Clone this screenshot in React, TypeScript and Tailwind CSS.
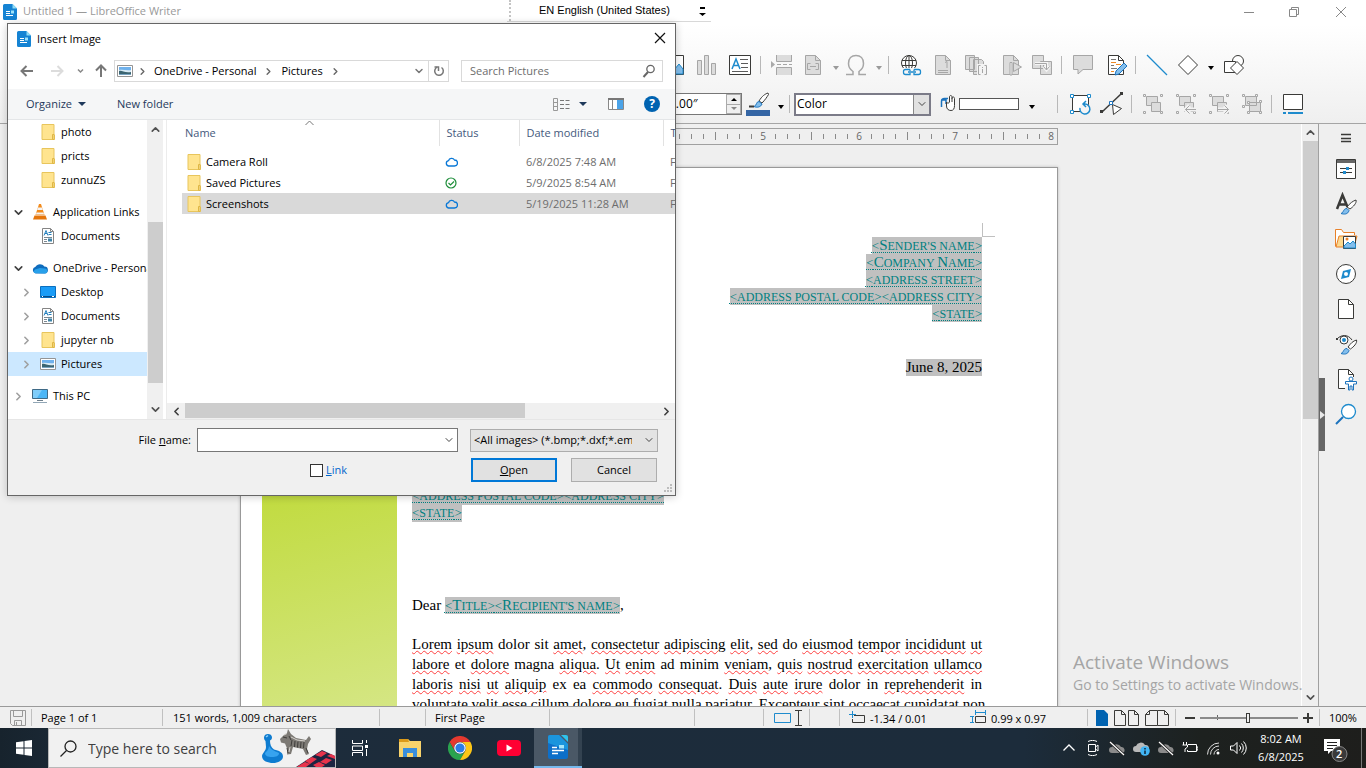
import type { ReactNode } from "react";
import { ChevronDown, ChevronLeft, ChevronRight, ChevronUp } from "lucide-react";

type Kids = { children?: ReactNode };

function Art({ w = 24, h = 24, children }: Kids & { w?: number; h?: number }) {
  return (
    <svg width={w} height={h} viewBox={`0 0 ${w} ${h}`} fill="none" className="block shrink-0" aria-hidden="true">
      {children}
    </svg>
  );
}

function Tool({ label, gap, children }: Kids & { label: string; gap: string }) {
  return (
    <button type="button" aria-label={label} className={`${gap} shrink-0`}>
      {children}
    </button>
  );
}

function Sep({ gap }: { gap: string }) {
  return <span className={`${gap} h-[18px] w-px shrink-0 bg-[#b8b8b8]`} />;
}

function Drop({ label, gap, muted }: { label: string; gap: string; muted?: boolean }) {
  return (
    <Tool label={label} gap={gap}>
      <Art w={8} h={20}>
        <path d="M1 11h6l-3 4z" fill={muted ? "#9a9a9a" : "#000"} />
      </Art>
    </Tool>
  );
}

const G = "#a6a6a6";
const L = "#dcdcdc";
const D = "#3a3a38";
const B = "#1e8bcd";

/* ---------- shared file icons ---------- */

function WriterIcon() {
  return (
    <Art w={14} h={16}>
      <path d="M1.500 0h8L14 4.500V14.500a1.500 1.500 0 0 1-1.500 1.500h-11A1.500 1.500 0 0 1 0 14.500v-13A1.500 1.500 0 0 1 1.500 0z" fill="#1583d3" />
      <path d="M9.500 0 14 4.500H9.500z" fill="#8fdcf5" />
      <path d="M3 7.500h4M3 9.500h4M3 11.500h7" stroke="#fff" />
      <path d="M8 6.500h3v3H8z" fill="#9de2fa" />
    </Art>
  );
}

function FolderIcon() {
  return (
    <Art w={16} h={16}>
      <path d="M2 .5h12v10.500h.5v4.500H2z" fill="#ffe48f" stroke="#e8c55c" />
      <path d="M12.500 15.500v-5h1.500v5z" fill="#ffe9a8" stroke="#dfb744" />
    </Art>
  );
}

function DocIcon() {
  return (
    <Art w={16} h={16}>
      <path d="M2.500.5h8l3 3v12h-11z" fill="#fff" stroke="#858585" />
      <path d="M10.500.5v3h3" stroke="#858585" />
      <path d="m4 7.500 2-5 2 5M5 5.500h2M8.500 4.500h3M8.500 6.500h3" stroke="#2480bd" />
      <path d="M4 9.500h8M4 11.500h3M4 13.500h3" stroke="#7b8993" />
      <path d="M8 10.500h4v3H8z" fill="#3d83a8" />
    </Art>
  );
}

function PictureIcon() {
  return (
    <Art w={16} h={16}>
      <path d="M.5 2.500h15v11H.5z" fill="#fff" stroke="#949494" />
      <path d="M2 4h12v4H2z" fill="#6fb1ec" />
      <path d="M2 7c4-1 8 1 12 0v2H2z" fill="#d8ebf5" />
      <path d="M2 8c3-1 5 2 12 1v3H2z" fill="#3b6572" />
      <path d="M2 11h12v1H2z" fill="#79a4c0" />
    </Art>
  );
}

function VlcIcon() {
  return (
    <Art w={16} h={16}>
      <path d="M7 0h2l3.500 11h-9z" fill="#f38b1c" />
      <path d="M6 3.500h4l.8 2.500H5.200zM4.500 8.500h7l.6 2H3.900z" fill="#f4f4f4" />
      <path d="m2.500 11.500h11l1.500 4H1z" fill="#e5760c" />
    </Art>
  );
}

function OneDriveIcon() {
  return (
    <Art w={16} h={16}>
      <path d="M3.500 13.500a3.500 3.500 0 0 1 0-6.800A5.200 5.200 0 0 1 12.300 6.500a3.500 3.500 0 0 1 .2 7z" fill="#0f6cbd" />
      <path d="M2 13a3 3 0 0 1 1-3.500L8 8l4.500.5a2.500 2.500 0 0 1 .5 5z" fill="#28a0ea" />
    </Art>
  );
}

function DesktopIcon() {
  return (
    <Art w={16} h={16}>
      <path d="M.5 2.500h15v11H.5z" fill="#1a9cf7" stroke="#0b6fbe" />
      <path d="M1 12.500h14" stroke="#064b88" />
      <path d="M2 12.500h1M12 12.500h2" stroke="#fff" />
    </Art>
  );
}

function PcIcon() {
  return (
    <Art w={16} h={16}>
      <path d="M.5 1.500h15v9H.5z" fill="#4bb6f6" stroke="#3f6a86" />
      <path d="M5 12.500h6" stroke="#6d7f8c" />
      <path d="M1 14.500h14" stroke="#92a7b6" />
      <path d="M1 2h9L5 10H1z" fill="#7fcdfa" />
    </Art>
  );
}

/* ---------- writer toolbars ---------- */

function GroupArt({ arrow }: { arrow?: "left" | "right" }) {
  const line = arrow === "left" ? "M22 17.500H11.500m4-4-4 4 4 4" : "M11 17.500h10.500m-4-4 4 4-4 4";
  return (
    <Art>
      <path d="M5.500 4.500h11v9h-11z" fill={L} stroke={G} />
      <path d="M10.500 10.500h9v9h-9z" fill={L} stroke={G} />
      <path d="M2.500 2.500h2v2h-2zM19.500 2.500h2v2h-2zM2.500 19.500h2v2h-2zM19.500 19.500h2v2h-2z" fill="#f4f4f4" stroke={G} />
      {arrow && <path d={line} stroke="#f2f2f2" strokeWidth="4" />}
      {arrow && <path d={line} stroke={G} />}
    </Art>
  );
}

function InsertToolbar() {
  return (
    <div className="flex h-10 items-center overflow-hidden pl-[662px]">
      <Tool label="Insert image" gap="">
        <Art>
          <path d="M2.500 2.500h19v19h-19z" fill="#fff" stroke={D} />
          <path d="M3 19l5-6 4 4 5-6 4 5v5H3z" fill="#83beec" stroke={B} />
        </Art>
      </Tool>
      <Tool label="Insert chart" gap="ml-2">
        <Art>
          <path d="M3.500 7.500h4v14h-4zM10.500 2.500h4v19h-4zM17.500 10.500h4v11h-4z" fill={L} stroke={G} />
        </Art>
      </Tool>
      <Tool label="Insert text box" gap="ml-[10px]">
        <Art>
          <path d="M1.500 2.500h21v19h-21z" fill="#fff" stroke={D} />
          <path d="m4 16 4-10 4 10M5.500 12.500h5" stroke={B} strokeWidth="1.500" />
          <path d="M12 6.500h8M13 10.500h7M13 14.500h7M4 18.500h16" stroke="#5c5c5c" />
        </Art>
      </Tool>
      <Sep gap="ml-2" />
      <Tool label="Insert page break" gap="ml-[9px]">
        <Art>
          <path d="M6.500 2v6.500h15V2M6.500 22v-7.500h15V22" fill={L} stroke={G} />
          <path d="M7 11.500h15" stroke={G} strokeDasharray="4 2" />
          <path d="m1 8 4 3.500-4 3.500z" fill="#aaa" />
        </Art>
      </Tool>
      <Tool label="Insert field" gap="ml-[7px]">
        <Art>
          <path d="M4.500 2.500h10l5 5v14h-15z" fill={L} stroke={G} />
          <path d="M14.500 2.500v5h5M9.500 10.500h-3v6h3M14.500 10.500h3v6h-3M9 13.500h6" stroke={G} />
        </Art>
      </Tool>
      <Drop label="Field choices" gap="ml-[7px]" muted />
      <Tool label="Special character" gap="ml-1">
        <Art>
          <path d="M2 21.500h7v-3c-3-2-4.500-4-4.500-8 0-5 3-8 7.500-8s7.500 3 7.500 8c0 4-1.500 6-4.500 8v3h7" stroke={G} strokeWidth="1.500" />
        </Art>
      </Tool>
      <Drop label="Symbol choices" gap="ml-[7px]" muted />
      <Sep gap="ml-[5px]" />
      <Tool label="Insert hyperlink" gap="ml-[9px]">
        <Art>
          <g stroke={D}>
            <circle cx="11" cy="10" r="7.500" fill="#fff" />
            <ellipse cx="11" cy="10" rx="3.500" ry="7.500" />
            <path d="M11 2.500v15M4 7.500h14M4 12.500h14" />
          </g>
          <path d="M5 15h19v8H5z" fill="#f7f7f7" />
          <path d="M12 16.500H7.500a2 2 0 0 0-2 2v1a2 2 0 0 0 2 2H12v-1.500m0-2v-1.500m4 0h4.500a2 2 0 0 1 2 2v1a2 2 0 0 1-2 2H16v-1.500m0-2v-1.500M10 19h8" stroke={B} strokeWidth="1.300" />
        </Art>
      </Tool>
      <Tool label="Insert footnote" gap="ml-[9px]">
        <Art>
          <path d="M4.500 2.500h10l5 5v14h-15z" fill={L} stroke={G} />
          <path d="M14.500 2.500v5h5M7 17.500h10M7 19.500h10M14 9.500l2-1V15" stroke={G} />
        </Art>
      </Tool>
      <Tool label="Insert index" gap="ml-2">
        <Art>
          <path d="M2.500 2.500h9v14h-9zM6.500 4.500h9v14h-9zM10.500 6.500h8l2 2v13h-10z" fill={L} stroke={G} />
          <path d="M14 11h10v12H14z" fill="#f4f4f4" />
          <path d="M17.500 12.500h-2v9h2M21.500 12.500h2v9h-2M19.500 14v1M19.500 16v4" stroke={G} />
        </Art>
      </Tool>
      <Tool label="Insert bookmark" gap="ml-3">
        <Art>
          <path d="M4.500 2.500h10l5 5v14h-15z" fill={L} stroke={G} />
          <path d="M14.500 2.500v5h5" stroke={G} />
          <path d="M11 9.500h2V22h-2z" fill="#f5f5f5" stroke={G} />
          <path d="m14.500 9.500 8 4.500-8 4.500z" fill={L} stroke={G} />
        </Art>
      </Tool>
      <Tool label="Insert cross-reference" gap="ml-[7px]">
        <Art>
          <path d="M2.500 2.500h11v13h-11zM10.500 8.500h11v13h-11z" fill={L} stroke={G} />
          <path d="M5 10.500h11.500v6m-3-3 3 3.500 3-3.500" stroke="#f5f5f5" strokeWidth="3" />
          <path d="M5 10.500h11.500v6m-3-3 3 3.500 3-3.500" stroke={G} />
        </Art>
      </Tool>
      <Sep gap="ml-[7px]" />
      <Tool label="Insert comment" gap="ml-[9px]">
        <Art>
          <path d="M2.500 2.500h19v14H12l-5 4.500v-4.500H2.500z" fill={L} stroke={G} />
        </Art>
      </Tool>
      <Tool label="Track changes" gap="ml-[9px]">
        <Art>
          <path d="M4.500 2.500h10l5 5v14h-15z" fill="#fff" stroke={D} />
          <path d="M14.500 2.500v5h5" stroke={D} />
          <path d="M7 6.500h5M7 12.500h3M7 15.500h6" stroke="#777" />
          <path d="M7 9.500h5M12 11.500h5M7 18.500h3" stroke="#f08a24" />
          <path d="m11 22 1-4 8-8 3 3-8 8z" fill="#83beec" stroke="#1c73bd" />
        </Art>
      </Tool>
      <Sep gap="ml-[7px]" />
      <Tool label="Insert line" gap="ml-[9px]">
        <Art>
          <path d="m2 2 20 20" stroke={B} strokeWidth="1.300" />
        </Art>
      </Tool>
      <Tool label="Basic shapes" gap="ml-[7px]">
        <Art>
          <path d="m12 2.500 9.500 9.500-9.500 9.500L2.500 12z" fill="#fff" stroke={D} />
        </Art>
      </Tool>
      <Drop label="Shape choices" gap="ml-[7px]" />
      <Tool label="Show draw functions" gap="ml-[7px]">
        <Art>
          <circle cx="16" cy="8" r="5.500" fill="#fff" stroke={D} />
          <path d="M2.500 8.500h11v11h-11z" fill="#fff" stroke={D} />
          <path d="m15 8.500 6.500 6.500-6.500 6.500L8.500 15z" fill="#fff" stroke={D} />
        </Art>
      </Tool>
    </div>
  );
}

function ImageToolbar() {
  return (
    <div className="flex h-[38px] items-center overflow-hidden pl-[642px]">
      <div className="flex h-[22px] w-[100px] shrink-0 items-center border border-[#777] bg-white">
        <input aria-label="Line width" defaultValue="0.00″" className="w-0 min-w-0 grow pl-[26px] text-[12px] text-black outline-none" />
        <span className="flex h-full w-[15px] shrink-0 flex-col border border-[#aaa] bg-[#efefef]">
          <button type="button" aria-label="Increase" className="flex grow items-center justify-center border-b border-[#aaa]">
            <Art w={6} h={4}>
              <path d="M0 4h6L3 1z" fill="#000" />
            </Art>
          </button>
          <button type="button" aria-label="Decrease" className="flex grow items-center justify-center">
            <Art w={6} h={4}>
              <path d="M0 0h6L3 3z" fill="#888" />
            </Art>
          </button>
        </span>
      </div>
      <Tool label="Line color" gap="ml-1">
        <Art>
          <path d="M0 18h24v6H0z" fill="#3465a4" />
          <path d="M3 14.500h5" stroke={D} strokeWidth="2" />
          <path d="M13 9c3-5 6-7 9-8l.5 1.500C21 5 19 8 16 11z" fill="#fff" stroke={D} />
          <path d="M8 14.500c3-1 2-5 5-5l3 2.500c-1 3-5 4-8 2.500z" fill="#83beec" stroke="#1c73bd" />
        </Art>
      </Tool>
      <Drop label="Line color choices" gap="ml-[7px]" />
      <Sep gap="ml-1" />
      <div className="ml-1 grid h-[23px] w-[137px] shrink-0 items-stretch border-2 border-[#7b7b88] bg-white">
        <select aria-label="Area style" className="col-start-1 row-start-1 appearance-none px-px text-[12px] text-black outline-none">
          <option>Color</option>
        </select>
        <span className="pointer-events-none col-start-1 row-start-1 flex w-4 items-center justify-center justify-self-end border-l border-[#888] bg-[#e1e1e1]">
          <ChevronDown size={12} color="#444" />
        </span>
      </div>
      <Tool label="Fill color" gap="ml-[9px]">
        <Art w={16} h={22}>
          <path d="M1.500 14V8.500c0-2 1-3 3-3H8M1 7h5v4" stroke="#1c73bd" strokeWidth="1.500" />
          <path d="M6.500 9v4c0 3 2 4.500 4.500 4.500s3.500-2 3.500-5V5.500c0-2-2.500-2-2.500 0V4c0-2-2.500-2-2.500 0v5L8 10.500z" fill="#fff" stroke={D} />
          <path d="M12 5v4" stroke={D} />
        </Art>
      </Tool>
      <span className="ml-[3px] h-3 w-[60px] shrink-0 border border-[#555] bg-white" />
      <Drop label="Fill color choices" gap="ml-[9px]" />
      <Sep gap="ml-[21px]" />
      <Tool label="Rotate" gap="ml-[10px]">
        <Art>
          <path d="M4.500 3.500h16v16h-16z" fill="#fff" stroke={D} />
          <circle cx="17" cy="17" r="5.500" fill="#f4f4f4" />
          <path d="M12 16a5 5 0 1 0 5-4h-2m3-3-3 3 3 3" stroke={B} strokeWidth="1.500" />
          <path d="M2.500 2.500h3v3h-3zM19.500 2.500h3v3h-3zM2.500 18.500h3v3h-3z" fill="#fff" stroke={B} />
        </Art>
      </Tool>
      <Tool label="Edit points" gap="ml-2">
        <Art>
          <path d="M2 20 21 2" stroke={D} strokeWidth="1.500" />
          <path d="M0 18h3v3H0zM20 0h3v3h-3z" fill={D} />
          <path d="m12.500 12.500 9 4-8 6z" fill="#fff" stroke={D} />
          <path d="M9.500 9.500h3v3h-3z" fill="#fff" stroke="#1c73bd" />
        </Art>
      </Tool>
      <Sep gap="ml-[7px]" />
      <Tool label="Group" gap="ml-[9px]">
        <GroupArt />
      </Tool>
      <Tool label="Enter group" gap="ml-[9px]">
        <GroupArt arrow="left" />
      </Tool>
      <Tool label="Exit group" gap="ml-[9px]">
        <GroupArt arrow="right" />
      </Tool>
      <Tool label="Ungroup" gap="ml-[9px]">
        <Art>
          <path d="M5.500 4.500h11v9h-11zM9.500 10.500h11v9h-11z" fill={L} stroke={G} />
          <path d="M2.500 2.500h2v2h-2zM15.500 2.500h2v2h-2zM2.500 13.500h2v2h-2zM7.500 9.500h2v2h-2zM19.500 8.500h2v2h-2zM7.500 19.500h2v2h-2zM19.500 19.500h2v2h-2z" fill="#f4f4f4" stroke={G} />
        </Art>
      </Tool>
      <Sep gap="ml-[7px]" />
      <Tool label="Extrusion" gap="ml-[9px]">
        <Art>
          <path d="M2.500 2.500h19v15h-19z" fill="#fff" stroke={D} />
          <path d="M2 21h3M7 21h15" stroke={B} strokeWidth="2" />
        </Art>
      </Tool>
    </div>
  );
}

/* ---------- document ---------- */

function Ruler() {
  const cells = Array.from({ length: 68 }, (_, i) => 67 - i);
  return (
    <div className="flex h-[17px] items-center justify-end overflow-hidden border border-[#a0a0a0] bg-[#efefef]">
      {cells.map((j) => (
        <span key={j} className="flex w-3 shrink-0 items-center justify-center pb-px text-[10px] leading-[13px] text-[#666]">
          {j % 8 === 0 ? 8 - j / 8 : <i className={j % 8 === 4 ? "h-2 w-px bg-[#8a8a8a]" : "h-[5px] w-px bg-[#8a8a8a]"} />}
        </span>
      ))}
    </div>
  );
}

/* Capitals keep the full size, the other letters are set as small capitals. */
function Field({ text }: { text: string }) {
  const parts = text.split(/([A-Z<>])/).filter(Boolean);
  return (
    <span className="inline-block h-[17px] bg-[#c0c0c0] align-top text-[12px] text-[#008080] uppercase underline decoration-dotted decoration-1 underline-offset-2">
      {parts.map((p, i) => (
        <span key={i} className={/^[A-Z]$/.test(p) ? "text-[15px]" : /^[<>]$/.test(p) ? "text-[13px]" : undefined}>
          {p}
        </span>
      ))}
    </span>
  );
}

const BODY = [
  "~Lorem ~ipsum dolor sit ~amet, ~consectetur ~adipiscing ~elit, ~sed do ~eiusmod ~tempor ~incididunt ~ut",
  "~labore et ~dolore magna ~aliqua. ~Ut ~enim ad minim ~veniam, ~quis ~nostrud ~exercitation ~ullamco",
  "~laboris ~nisi ~ut ~aliquip ex ea ~commodo ~consequat. ~Duis ~aute ~irure dolor in ~reprehenderit in",
  "~voluptate ~velit ~esse ~cillum ~dolore ~eu ~fugiat ~nulla ~pariatur. ~Excepteur ~sint ~occaecat ~cupidatat non",
];

function BodyLine({ line }: { line: string }) {
  return (
    <span className="block text-justify whitespace-nowrap [text-align-last:justify]">
      {line.split(" ").map((word, i) => {
        const marked = word.startsWith("~");
        const [, core, end] = word.match(/^~?([A-Za-z]+)(.*)$/) ?? ["", word, ""];
        return (
          <span key={i}>
            {i > 0 && " "}
            {marked ? <span className="underline decoration-[#ff4040] decoration-wavy decoration-1 underline-offset-1">{core}</span> : core}
            {end}
          </span>
        );
      })}
    </span>
  );
}

function Page() {
  return (
    <div className="relative mt-[22px] flex min-h-[1056px] border border-[#999] bg-white pr-[75px] pl-[21px] shadow-[0_0_3px_#bbb]">
      <span className="absolute top-[55px] right-[62px] h-[14px] w-[13px] border-b border-l border-[#c0c0c0]" />
      <div className="mt-[300px] h-[280px] w-[135px] shrink-0 bg-[linear-gradient(165deg,#bfda38,#d8e88f)]" />
      <div className="ml-[15px] min-w-0 grow pt-[69px] font-['Liberation_Serif',serif] text-[15px] leading-[17px] text-black">
        <div className="flex flex-col items-end">
          <Field text="<Sender's name>" />
          <Field text="<Company Name>" />
          <Field text="<address street>" />
          <Field text="<address postal code><address city>" />
          <Field text="<state>" />
        </div>
        <p className="mt-[37px] text-right">
          <span className="inline-block bg-[#c0c0c0]">June 8, 2025</span>
        </p>
        <div className="mt-28 flex flex-col items-start leading-4">
          <Field text="<address postal code><address city>" />
          <Field text="<state>" />
        </div>
        <p className="mt-[75px]">
          Dear <Field text="<Title><Recipient's name>" />,
        </p>
        <p className="mt-5 leading-5">
          {BODY.map((line) => (
            <BodyLine key={line} line={line} />
          ))}
        </p>
      </div>
    </div>
  );
}

function Sidebar() {
  return (
    <nav aria-label="Sidebar" className="flex w-[41px] shrink-0 flex-col items-center pt-[7px]">
      <Tool label="Sidebar settings" gap="">
        <Art h={14}>
          <path d="M7 3.500h10M7 7.500h10M7 10.500h10" stroke={D} strokeWidth="1.500" />
        </Art>
      </Tool>
      <Tool label="Properties" gap="mt-3">
        <Art>
          <path d="M2.500 2.500h19v19h-19z" fill="#fff" stroke={D} />
          <path d="M3 3h18v3H3z" fill="#666" />
          <path d="M6 11.500h12M6 15.500h12" stroke={D} />
          <path d="M12 10h3v3h-3zM9 14h3v3H9z" fill={B} />
        </Art>
      </Tool>
      <Tool label="Styles" gap="mt-[11px]">
        <Art>
          <path d="m3 17 5.500-14 5 12M5 12.500h8" stroke={D} strokeWidth="2.500" />
          <path d="M13 15c3-4 6-6 9-7 1 3-3 7-6 9z" fill="#fff" stroke={D} />
          <path d="M7 21.500c3-1 2-5 6-5l2 2c-1 4-5 4-8 3z" fill="#83beec" stroke="#1c73bd" />
        </Art>
      </Tool>
      <Tool label="Gallery" gap="mt-[11px]">
        <Art>
          <path d="M1.500 19.500v-17h6l2 3h11V8" fill="#fff" stroke="#e8812a" />
          <path d="m2 20 3-11h18l-3 11z" fill="#fcd98f" stroke="#e8812a" />
          <path d="M9.500 9.500h12v12h-12z" fill="#fff" stroke={D} />
          <path d="m10 19 4-4 2 2 3-3 2.500 3v4H10z" fill="#83beec" stroke={B} />
          <circle cx="13" cy="12" r="1.500" fill="#e8812a" />
        </Art>
      </Tool>
      <Tool label="Navigator" gap="mt-[11px]">
        <Art>
          <circle cx="12" cy="12" r="9.500" fill="#fff" stroke={D} />
          <path d="m7 17 2-8 8-2-2 8z" fill={B} />
          <circle cx="12" cy="12" r="2" fill="#fff" />
        </Art>
      </Tool>
      <Tool label="Page" gap="mt-[11px]">
        <Art>
          <path d="M4.500 2.500h10l5 5v14h-15z" fill="#fff" stroke={D} />
          <path d="M14.500 2.500v5h5" stroke={D} />
        </Art>
      </Tool>
      <Tool label="Style inspector" gap="mt-[11px]">
        <Art>
          <path d="M2 8c5-6 12-6 16 0M2 6l2 2" stroke={D} />
          <circle cx="10" cy="8" r="4" fill="#fff" stroke={D} />
          <circle cx="10" cy="8" r="2" fill={B} />
          <path d="M14 15c3-4 5-6 8.500-7 1 3-3 7-6 9z" fill="#fff" stroke={D} />
          <path d="M7 21.500c3-1 2-5 6-5l2 2c-1 4-5 4-8 3z" fill="#83beec" stroke="#1c73bd" />
        </Art>
      </Tool>
      <Tool label="Accessibility check" gap="mt-[11px]">
        <Art>
          <path d="M11 21.500H4.500v-19h10l5 5V10" fill="#fff" stroke={D} />
          <path d="M14.500 2.500v5h5" stroke={D} />
          <circle cx="17" cy="12" r="2" fill="#fff" stroke="#1c73bd" />
          <path d="M11.500 14.500h11v2.500H19.500v6h-1.500v-4h-2v4h-1.500v-6h-3z" fill="#fff" stroke="#1c73bd" />
        </Art>
      </Tool>
      <Tool label="Find" gap="mt-[11px]">
        <Art>
          <circle cx="14.500" cy="9.500" r="7" fill="#fff" stroke={B} strokeWidth="1.300" />
          <path d="m2 22 7-7" stroke="#1c73bd" strokeWidth="2" />
        </Art>
      </Tool>
    </nav>
  );
}

function StatusBar() {
  const cell = "flex shrink-0 items-center border-r border-[#c0c0c0]";
  return (
    <footer className="flex h-[22px] shrink-0 border-t border-[#9a9a9a] bg-[#efefef] py-[2px] text-[11px] text-black">
      <span className={`${cell} w-8 pl-[10px]`}>
        <Art w={16} h={16}>
          <path d="M.5.5h15v15H2.500l-2-2zM3.500.5v6h9v-6M4.500 15.500v-5h7v5M6.500 12v3" stroke="#999" />
        </Art>
      </span>
      <span className={`${cell} w-[131px] pt-[2px] pl-[9px]`}>Page 1 of 1</span>
      <span className={`${cell} w-[217px] pt-[2px] pl-[10px]`}>151 words, 1,009 characters</span>
      <span className={`${cell} w-[46px]`} />
      <span className={`${cell} w-[124px] pt-[2px] pl-[9px]`}>First Page</span>
      <span className={`${cell} w-[145px]`} />
      <span className={`${cell} w-[69px]`} />
      <span className={`${cell} w-[46px] pl-2`}>
        <Art w={32} h={18}>
          <path d="M2.500 4.500h16v9h-16z" stroke={B} />
          <path d="M23 1.500h7M23 16.500h7M26.500 2v14" stroke={D} />
        </Art>
      </span>
      <span className={`${cell} w-[30px]`} />
      <span className="flex min-w-0 grow items-center border-r border-[#c0c0c0] pl-[9px]">
        <Art w={16} h={16}>
          <path d="M5 5.500h10.500v7h-12V9" stroke={D} />
          <path d="M3.500 1v7M0 4.500h7" stroke={B} />
        </Art>
        <span className="w-[105px] pt-1 pl-[5px]">-1.34 / 0.01</span>
        <Art w={16} h={16}>
          <path d="M5.500 6.500h10v6h-10z" stroke={D} />
          <path d="M5.500 0v5M15.500 0v5M6 2.500h9M0 6.500h4M0 12.500h4M2.500 7v5" stroke={B} />
        </Art>
        <span className="pt-1 pl-[5px]">0.99 x 0.97</span>
      </span>
      <span className={`${cell} w-[88px] gap-[5px] pl-2`}>
        <Art w={13} h={16}>
          <path d="M0 0h8l4 4v12H0z" fill="#0063b1" />
        </Art>
        <Art w={26} h={16}>
          <path d="M.5.5h7l4 4v11H.5zM7.500.5v4h4M14.500.5h6l4 4v11h-10zM20.500.5v4h4" stroke={D} />
        </Art>
        <Art w={25} h={16}>
          <path d="M4.500.5h8v15H.5v-11zM4.500.5v4h-4M12.500.5h7l4 4v11h-11M19.500.5v4h4" stroke={D} />
        </Art>
      </span>
      <span className={`${cell} w-36 justify-between pr-[6px] pl-[9px]`}>
        <button type="button" aria-label="Zoom out" className="h-[2px] w-[10px] bg-[#3a3a38]" />
        <span className="grid items-center justify-items-start">
          <i className="col-start-1 row-start-1 ml-[17px] h-[5px] w-px bg-[#666]" />
          <input
            type="range"
            aria-label="Zoom"
            defaultValue={49}
            className="col-start-1 row-start-1 h-4 w-[98px] appearance-none bg-[linear-gradient(#8a8a8a,#8a8a8a)] bg-[length:100%_2px] bg-center bg-no-repeat [&::-webkit-slider-thumb]:h-[10px] [&::-webkit-slider-thumb]:w-1 [&::-webkit-slider-thumb]:appearance-none [&::-webkit-slider-thumb]:border [&::-webkit-slider-thumb]:border-[#3a3a38] [&::-webkit-slider-thumb]:bg-[#efefef]"
          />
        </span>
        <button type="button" aria-label="Zoom in">
          <Art w={10} h={10}>
            <path d="M5 0v10M0 5h10" stroke={D} strokeWidth="2" />
          </Art>
        </button>
      </span>
      <span className="flex w-[46px] shrink-0 items-center pt-[2px] pl-[9px]">100%</span>
    </footer>
  );
}

/* ---------- Insert Image dialog ---------- */

type Node = { name: string; icon: ReactNode; depth: 0 | 1; mark?: "open" | "closed"; active?: boolean; top?: boolean };

const TREE: Node[] = [
  { name: "photo", icon: <FolderIcon />, depth: 1 },
  { name: "pricts", icon: <FolderIcon />, depth: 1 },
  { name: "zunnuZS", icon: <FolderIcon />, depth: 1 },
  { name: "Application Links", icon: <VlcIcon />, depth: 0, mark: "open", top: true },
  { name: "Documents", icon: <DocIcon />, depth: 1 },
  { name: "OneDrive - Personal", icon: <OneDriveIcon />, depth: 0, mark: "open", top: true },
  { name: "Desktop", icon: <DesktopIcon />, depth: 1, mark: "closed" },
  { name: "Documents", icon: <DocIcon />, depth: 1, mark: "closed" },
  { name: "jupyter nb", icon: <FolderIcon />, depth: 1, mark: "closed" },
  { name: "Pictures", icon: <PictureIcon />, depth: 1, mark: "closed", active: true },
  { name: "This PC", icon: <PcIcon />, depth: 0, mark: "closed", top: true },
];

const FILES = [
  { name: "Camera Roll", status: "cloud", date: "6/8/2025 7:48 AM" },
  { name: "Saved Pictures", status: "ok", date: "5/9/2025 8:54 AM" },
  { name: "Screenshots", status: "cloud", date: "5/19/2025 11:28 AM" },
];

function TreePane() {
  return (
    <ul className="w-[139px] shrink-0 overflow-hidden">
      {TREE.map((n, i) => (
        <li key={i} className={n.top ? "mt-2" : ""}>
          <button
            type="button"
            className={`flex h-6 w-full items-center overflow-hidden whitespace-nowrap ${n.depth ? "pl-3" : "pl-1"} ${n.active ? "bg-[#cce8ff]" : ""}`}
          >
            <span className="w-4 shrink-0">
              {n.mark === "open" && <ChevronDown size={13} color="#404040" strokeWidth={3} />}
              {n.mark === "closed" && <ChevronRight size={13} color="#a0a0a0" strokeWidth={3} />}
            </span>
            <span className="mr-[5px] ml-1 shrink-0">{n.icon}</span>
            {n.name}
          </button>
        </li>
      ))}
    </ul>
  );
}

function FilePane() {
  return (
    <div className="flex min-w-0 grow flex-col border-l border-[#ececec]">
      <div className="relative grow overflow-hidden pl-[15px]">
        <span className="absolute top-0 left-[138px]">
          <Art w={9} h={6}>
            <path d="m.5 5 4-4 4 4" stroke="#777" />
          </Art>
        </span>
        <table className="w-[650px] table-fixed border-collapse text-left">
          <colgroup>
            <col className="w-[257px]" />
            <col className="w-20" />
            <col className="w-36" />
            <col />
          </colgroup>
          <thead>
            <tr className="h-[26px] text-[#44597c]">
              <th className="border-r border-[#e2e2e2] pl-[3px] font-normal">Name</th>
              <th className="border-r border-[#e2e2e2] pl-[7px] font-normal">Status</th>
              <th className="border-r border-[#e2e2e2] pl-[7px] font-normal">Date modified</th>
              <th className="pl-[7px] font-normal">Type</th>
            </tr>
          </thead>
          <tbody>
            <tr className="h-[5px]">
              <td colSpan={4} className="p-0" />
            </tr>
            {FILES.map((f, i) => (
              <tr key={f.name} className={`h-[21px] text-[#6d6d6d] ${i === 2 ? "bg-[#d9d9d9]" : ""}`}>
                <td className="p-0 pl-1">
                  <span className="flex items-center gap-1 text-black">
                    <FolderIcon />
                    {f.name}
                  </span>
                </td>
                <td className="p-0 pl-[6px]">
                  {f.status === "cloud" ? (
                    <Art w={13} h={12}>
                      <path d="M3.500 10a2.700 2.700 0 0 1 0-5.300A3.300 3.300 0 0 1 9.500 4a3 3 0 0 1 0 6z" stroke="#0a78d7" strokeWidth="1.300" />
                    </Art>
                  ) : (
                    <Art w={13} h={12}>
                      <circle cx="6" cy="6" r="5" stroke="#1e8e3a" strokeWidth="1.200" />
                      <path d="m3.500 6 2 2 3.500-3.500" stroke="#1e8e3a" strokeWidth="1.200" />
                    </Art>
                  )}
                </td>
                <td className="p-0 pl-[7px]">{f.date}</td>
                <td className="p-0 pl-[7px]">File folder</td>
              </tr>
            ))}
          </tbody>
        </table>
      </div>
      <div className="flex h-4 shrink-0 items-center bg-[#f0f0f0]">
        <span className="w-[18px] shrink-0 pl-[3px]">
          <ChevronLeft size={13} color="#404040" strokeWidth={3} />
        </span>
        <span className="h-[15px] w-[340px] self-start bg-[#cdcdcd]" />
        <span className="ml-auto pr-[2px]">
          <ChevronRight size={13} color="#404040" strokeWidth={3} />
        </span>
      </div>
    </div>
  );
}

function InsertImageDialog() {
  return (
    <section
      role="dialog"
      aria-label="Insert Image"
      className="absolute top-[23px] left-[7px] z-10 flex h-[473px] w-[669px] flex-col border border-[#666] bg-white text-[11px] leading-4 text-black shadow-[0_1px_8px_#0003]"
    >
      <header className="flex h-[29px] shrink-0 items-center pr-2 pl-[9px]">
        <WriterIcon />
        <h1 className="grow pl-[6px] text-[11px]">Insert Image</h1>
        <button type="button" aria-label="Close">
          <Art w={14} h={15}>
            <path d="m2 2 10 10M12 2 2 12" stroke="#111" strokeWidth="1.200" />
          </Art>
        </button>
      </header>

      <div className="flex h-9 shrink-0 items-center pr-3 pl-3">
        <Art w={90} h={20}>
          <path d="M13 10H1.500m5-5-5 5 5 5" stroke="#777" strokeWidth="2" />
          <path d="M31 10h11.500m-5-5 5 5-5 5" stroke="#dcdcdc" strokeWidth="2" />
          <path d="m58 8.500 2.500 2.500L63 8.500" stroke="#888" strokeWidth="1.500" />
          <path d="M81 16V4.500m-5 5 5-5 5 5" stroke="#777" strokeWidth="2" />
        </Art>
        <div className="ml-1 flex h-[22px] w-[335px] shrink-0 items-center border border-[#d9d9d9] pl-[2px]">
          <PictureIcon />
          <span className="ml-1 w-[17px] shrink-0">
            <ChevronRight size={11} color="#666" strokeWidth={3} />
          </span>
          <span className="text-[11px]">OneDrive - Personal</span>
          <ChevronRight size={11} color="#666" strokeWidth={3} className="mx-[7px] shrink-0" />
          Pictures
          <ChevronRight size={11} color="#666" strokeWidth={3} className="ml-[7px] shrink-0" />
          <span className="ml-auto pr-[3px]">
            <ChevronDown size={12} color="#777" strokeWidth={3} />
          </span>
          <button type="button" aria-label="Refresh" className="flex h-full w-5 items-center justify-center border-l border-[#d9d9d9]">
            <Art w={12} h={12}>
              <path d="M8.500 2.500a4.300 4.300 0 1 1-4.500-.3" stroke="#777" strokeWidth="1.500" />
              <path d="M1.500 2h4v4" stroke="#777" strokeWidth="1.500" />
            </Art>
          </button>
        </div>
        <div className="ml-3 flex h-[22px] grow items-center border border-[#d9d9d9] pr-[6px] pl-2">
          <input aria-label="Search Pictures" placeholder="Search Pictures" className="min-w-0 grow outline-none placeholder:text-[#6d6d6d]" />
          <Art w={14} h={14}>
            <circle cx="8.500" cy="5" r="3.700" stroke="#666" strokeWidth="1.300" />
            <path d="m6 8-4.500 5" stroke="#666" strokeWidth="2" />
          </Art>
        </div>
      </div>

      <div className="flex h-[31px] shrink-0 items-center border-b border-[#e4e6e8] bg-[#f5f6f7] pr-[15px] pl-[18px] text-[#1e395b]">
        <button type="button" className="flex items-center gap-[6px]">
          Organize
          <Art w={8} h={4}>
            <path d="M0 0h8L4 4z" fill="#1e395b" />
          </Art>
        </button>
        <button type="button" className="ml-[31px]">
          New folder
        </button>
        <button type="button" aria-label="View" className="ml-auto flex items-center gap-[9px]">
          <Art w={17} h={13}>
            <path d="M.5.5h4v12h-4zM0 4.500h5M0 8.500h5" stroke="#999" />
            <path d="M7 2.500h4M12.500 2.500h4M7 6.500h4M12.500 6.500h4M7 10.500h4M12.500 10.500h4" stroke="#777" />
          </Art>
          <Art w={8} h={4}>
            <path d="M0 0h8L4 4z" fill="#1e395b" />
          </Art>
        </button>
        <button type="button" aria-label="Preview pane" className="ml-[21px]">
          <Art w={16} h={12}>
            <path d="M.5.5h15v11H.5zM4.500 2v9" fill="#fff" stroke="#888" />
            <path d="M0 0h16v2H0z" fill="#777" />
            <path d="M9 2h6v9H9z" fill="#4ba3e8" />
          </Art>
        </button>
        <button type="button" aria-label="Help" className="ml-5 flex size-4 items-center justify-center rounded-full bg-[#0063b1] text-[12px] font-bold text-white">
          ?
        </button>
      </div>

      <div className="flex min-h-0 grow">
        <TreePane />
        <div className="mr-[3px] flex w-4 shrink-0 flex-col items-center bg-[#f0f0f0] py-[3px]">
          <ChevronUp size={13} color="#505050" strokeWidth={3} className="shrink-0" />
          <span className="mt-[86px] w-[15px] grow bg-[#cdcdcd]" />
          <ChevronDown size={13} color="#505050" strokeWidth={3} className="mt-5 shrink-0" />
        </div>
        <FilePane />
      </div>

      <form className="relative flex h-[76px] shrink-0 flex-col border-t border-[#e6e6e6] bg-[#f0f0f0] pt-2 pr-[17px]" onSubmit={(e) => e.preventDefault()}>
        <div className="flex items-center">
          <label htmlFor="file-name" className="w-[183px] text-right">
            File <u>n</u>ame:
          </label>
          <div className="ml-[6px] flex h-6 w-[261px] items-center border border-[#777] bg-white pr-[2px]">
            <input id="file-name" className="min-w-0 grow px-1 outline-none" />
            <ChevronDown size={12} color="#444" />
          </div>
          <div className="ml-3 grid h-[23px] grow border border-[#adadad] bg-[#e3e3e3]">
            <select aria-label="File type" className="col-start-1 row-start-1 w-[161px] appearance-none pl-[3px] outline-none">
              <option>{"<All images> (*.bmp;*.dxf;*.emf;*.eps)"}</option>
            </select>
            <span className="pointer-events-none col-start-1 row-start-1 self-center justify-self-end pr-[2px]">
              <ChevronDown size={12} color="#444" />
            </span>
          </div>
        </div>
        <div className="mt-[6px] flex items-center justify-end pr-px">
          <label className="mr-[124px] flex items-center gap-[3px] text-[#0066cc]">
            <input type="checkbox" className="size-[13px] appearance-none border border-[#333] bg-white" />
            <span>
              <u>L</u>ink
            </span>
          </label>
          <button type="submit" className="h-6 w-[86px] border-2 border-[#0078d7] bg-[#e1e1e1]">
            <u>O</u>pen
          </button>
          <button type="button" className="ml-[14px] h-6 w-[86px] border border-[#adadad] bg-[#e1e1e1]">
            Cancel
          </button>
        </div>
        <span className="absolute right-[2px] bottom-[2px]">
          <Art w={9} h={9}>
            <path d="M6 0h2v2H6zM3 3h2v2H3zM6 3h2v2H6zM0 6h2v2H0zM3 6h2v2H3zM6 6h2v2H6z" fill="#bdbdbd" />
          </Art>
        </span>
      </form>
    </section>
  );
}

/* ---------- taskbar ---------- */

function CloudOff() {
  return (
    <Art w={16} h={16}>
      <path d="M3 13a3 3 0 0 1 0-6 5 5 0 0 1 9 0 3 3 0 0 1 1 6z" fill="#8b8b8b" />
      <path d="m1 2 14 13" stroke="#222" strokeWidth="3" />
      <path d="m1 2 14 13" stroke="#fff" strokeWidth="1.200" />
    </Art>
  );
}

function Taskbar() {
  return (
    <footer className="flex h-10 shrink-0 items-center bg-[linear-gradient(90deg,#17232d,#1d2c3b_8%,#1c2c3b_75%,#1d211f_88%,#1e1e1c)] text-white">
      <button type="button" aria-label="Start" className="flex w-12 shrink-0 justify-center">
        <Art w={16} h={16}>
          <path d="M0 2.300 7.500 1.200v6.300H0zM8.500 1 16 0v7.500H8.500zM0 8.500h7.500v6.300L0 13.700zM8.500 8.500H16V16l-7.500-1z" fill="#fff" />
        </Art>
      </button>
      <label className="flex h-full w-[288px] shrink-0 items-center border border-[#b8b8b8] bg-[#f1f1f1] pl-[11px]">
        <Art w={17} h={17}>
          <circle cx="10.500" cy="6.500" r="5.500" stroke="#222" strokeWidth="1.300" />
          <path d="M6.500 10.500.5 16.500" stroke="#222" strokeWidth="1.300" />
        </Art>
        <input aria-label="Search" placeholder="Type here to search" className="ml-[11px] w-0 min-w-0 grow text-[14px] outline-none placeholder:text-[#404040]" />
        <Art w={74} h={38}>
          <path d="M3 8.500C3 6 5 5 7 5s4 1 4 3.500c0 1.500-1 2.500-2 3 0 4 1 7 4 9 5 1 9 3 9 7 0 4-5 6.500-10 6.500S1 32 1 27c0-3 4-5 4-9l-.5-6C3.500 11 3 10 3 8.500z" fill="#0f7cd0" />
          <path d="M4 24c2-2 4-4 4-7 2 4 6 5 10 7 0 3-3 4-7 4s-7-1-7-4z" fill="#37a3ef" />
          <path d="m5 8 2-1.500" stroke="#8fd0fa" strokeWidth="1.500" />
          <path d="m19 10 4-4 3-2 1-4 3 5 5 4 10 2 3-4 2 3-3 5-1 5 2 5-3 1-3-6-10-2-2 7-4 .5.5-5-2.500-6-4-1z" fill="#7d7a75" />
          <path d="m22 8 4 1M28 7l2 4M31 11l-1 6M34 12l-.5 6M37 12.500l-.5 6M40 13l-.5 6M43 13l-.5 6M26 19l1 5M45 19l2 5" stroke="#3f3d3b" />
          <path d="m23 6 3-1.500M30 8l6 3 8 1M29 18l-1 5" stroke="#d6d3ce" />
          <path d="m35 38 26-17 13 6v11z" fill="#1c2542" />
          <path d="m44 32 7-4 5 2-7 5zM54 26l7-4 5 2-6 4zM59 33l6-4 6 2-6 4zM37 37l7-4 5 2-4 3h-9zM66 27l4-2 4 2v3zM52 36l6-3 6 3-3 2h-6z" fill="#e7344c" />
        </Art>
      </label>
      <button type="button" aria-label="Task view" className="flex w-12 shrink-0 justify-center">
        <Art w={16} h={16}>
          <path d="M.5 0v3.500h10V0M.5 16v-3.500h10V16M.5 6h10v4.500H.5zM14.500 0v3M14.500 9v7" stroke="#fff" />
          <path d="M13 5h3v3h-3z" fill="#fff" />
        </Art>
      </button>
      <button type="button" aria-label="File Explorer" className="ml-px flex w-[50px] shrink-0 justify-center">
        <Art w={22} h={20}>
          <path d="M0 1h9l2 2h11v16H0z" fill="#f8d36b" />
          <path d="M0 1h9l1 3H0z" fill="#dc9a18" />
          <path d="M4 19v-9h14v9h-4v-4H8v4z" fill="#3a8edb" />
        </Art>
      </button>
      <button type="button" aria-label="Chrome" className="flex w-[50px] shrink-0 justify-center">
        <Art>
          <path d="M1.600 6A12 12 0 0 1 22.400 6H12a6 6 0 0 0-5.200 9z" fill="#e5392f" />
          <path d="M1.600 6A12 12 0 0 0 12 24l5.200-9A6 6 0 0 1 6.800 15z" fill="#2aa34f" />
          <path d="M22.400 6A12 12 0 0 1 12 24l5.200-9A6 6 0 0 0 12 6z" fill="#fdc617" />
          <circle cx="12" cy="12" r="5.800" fill="#fff" />
          <circle cx="12" cy="12" r="4.600" fill="#2d7de9" />
        </Art>
      </button>
      <button type="button" aria-label="YouTube" className="flex w-12 shrink-0 justify-center">
        <Art w={24} h={18}>
          <rect y="1" width="24" height="16" rx="4" fill="#ff0033" />
          <path d="m9.500 5.500 6 3.500-6 3.500z" fill="#fff" />
        </Art>
      </button>
      <button type="button" aria-label="LibreOffice Writer" className="ml-px flex h-full w-11 shrink-0 items-center justify-center border-b-2 border-[#76b9ed] bg-[#4a5866] pl-1">
        <Art w={20} h={24}>
          <path d="M2 0h9l9 9v13a2 2 0 0 1-2 2H2a2 2 0 0 1-2-2V2a2 2 0 0 1 2-2z" fill="#0d6fc9" />
          <path d="M2 0h9l9 9v6L0 8V2a2 2 0 0 1 2-2z" fill="#1b95dd" />
          <path d="M13 0h5a2 2 0 0 1 2 2v5z" fill="#2ec3ec" />
          <path d="M4 12.500h5M4 15.500h12M4 18.500h6" stroke="#fff" strokeWidth="1.500" />
          <path d="M11 10h5v3.500h-5z" fill="#a5e5fa" />
        </Art>
      </button>
      <span className="h-full w-1 shrink-0 border-b-2 border-[#76b9ed] bg-[#334250]" />
      <div className="ml-auto flex shrink-0 items-center gap-2 pr-3">
        <Art w={16} h={16}>
          <path d="m2.500 10.500 5.500-5.500 5.500 5.500" stroke="#fff" strokeWidth="1.300" />
        </Art>
        <Art w={16} h={16}>
          <path d="M3.500 4.500h7v7h-7zM10.500 7l2.500-2v6l-2.500-2M3 1.500c3-1.500 6-1.500 9 0M3 14.500c3 1.500 6 1.500 9 0" stroke="#fff" />
        </Art>
        <CloudOff />
        <Art w={17} h={16}>
          <path d="M3 12a3 3 0 0 1 0-6 5 5 0 0 1 9-1 3 3 0 0 1 1 7z" fill="#b9b9b9" />
          <circle cx="12" cy="11" r="4.800" fill="#41b5f5" />
          <path d="M12 8v1.500M12 10.500V14" stroke="#123" strokeWidth="1.500" />
        </Art>
        <CloudOff />
        <Art w={16} h={16}>
          <path d="M6 4.500h8.500v7H5.500V10M14.500 7H16v3h-1.500" stroke="#fff" />
          <path d="M1.500 2v3M4.500 2v3M.5 5h5v2l-2.500 2v3" stroke="#fff" />
        </Art>
        <Art w={16} h={16}>
          <circle cx="12" cy="13" r="1.500" fill="#fff" />
          <path d="M8 14.500a5 5 0 0 1 5-5M4.500 14.500A8.500 8.500 0 0 1 13 6M1.500 14.500A11.500 11.500 0 0 1 13 3" stroke="#ddd" />
        </Art>
        <Art w={17} h={16}>
          <path d="M.5 6h3L7 2.500v11L3.500 10h-3zM9.500 5.500a3.500 3.500 0 0 1 0 5M11.500 3.500a6.500 6.500 0 0 1 0 9M13.500 1.500a9 9 0 0 1 0 13" stroke="#fff" />
        </Art>
        <p className="ml-[2px] w-12 text-center text-[11px] leading-[18px] whitespace-nowrap">
          8:02 AM
          <br />
          6/8/2025
        </p>
        <button type="button" aria-label="2 notifications" className="mt-[3px] ml-[10px]">
          <span className="relative block">
            <Art w={26} h={26}>
              <path d="M1 2h16v12H8l-3 3v-3H1z" fill="#fff" />
              <path d="M4 5.500h10M4 8.500h10M4 11.500h6" stroke="#222" />
              <circle cx="16.500" cy="17" r="7.500" fill="#3a3a3a" stroke="#888" />
            </Art>
            <span className="absolute top-[10px] left-[13px] text-[11px] leading-[14px] font-semibold">2</span>
          </span>
        </button>
      </div>
      <span className="h-full w-px shrink-0 bg-[#777]" />
      <span className="w-1 shrink-0" />
    </footer>
  );
}

/* ---------- app ---------- */

export default function App() {
  return (
    <main className="relative flex h-screen flex-col overflow-hidden bg-[#efefef] font-['Open_Sans','Noto_Sans',sans-serif]">
      <div className="shrink-0 border-b border-[#a5a5a5] bg-[linear-gradient(#fff,#fff_20%,#efefef)]">
        <header className="flex h-[23px] items-center pr-[19px] pl-[3px]">
          <WriterIcon />
          <span className="grow pl-[6px] text-[11px] text-[#999]">Untitled 1 — LibreOffice Writer</span>
          <span className="flex items-center gap-[35px]">
            <button type="button" aria-label="Minimize">
              <Art w={10} h={12}>
                <path d="M0 6.500h10" stroke="#888" />
              </Art>
            </button>
            <button type="button" aria-label="Restore">
              <Art w={11} h={12}>
                <path d="M.5 3.500h7v7h-7zM2.500 3V1.500h7v7H8" stroke="#888" />
              </Art>
            </button>
            <button type="button" aria-label="Close window">
              <Art w={12} h={12}>
                <path d="m1 1 10 10M11 1 1 11" stroke="#888" />
              </Art>
            </button>
          </span>
        </header>
        <div className="mt-[22px]">
          <InsertToolbar />
          <ImageToolbar />
        </div>
      </div>

      <div className="relative flex min-h-0 grow">
        <div className="min-w-0 grow overflow-hidden pt-1 pr-[3px]">
          <div className="mx-auto w-[818px]">
            <Ruler />
            <Page />
          </div>
        </div>
        <div className="flex w-[17px] shrink-0 flex-col items-center border-l border-white py-[2px]">
          <ChevronUp size={13} color="#505050" strokeWidth={3} />
          <span className="mt-[2px] h-[278px] w-[15px] bg-[#cdcdcd]" />
          <ChevronDown size={13} color="#505050" strokeWidth={3} className="mt-auto" />
        </div>
        <div className="w-[7px] shrink-0 border-l border-[#a0a0a0] pt-[254px]">
          <button type="button" aria-label="Collapse sidebar" className="flex h-[73px] w-full items-center justify-center bg-[#666]">
            <Art w={5} h={8}>
              <path d="m0 0 5 4-5 4z" fill="#e8e8e8" />
            </Art>
          </button>
        </div>
        <Sidebar />
        <div className="pointer-events-none absolute right-14 bottom-[10px] w-[237px] text-[#a5a5a5]">
          <p className="text-[19px] leading-6 whitespace-nowrap">Activate Windows</p>
          <p className="text-[14px] leading-[22px] whitespace-nowrap">Go to Settings to activate Windows.</p>
        </div>
      </div>

      <StatusBar />
      <Taskbar />

      <div className="absolute top-0 left-[507px] flex h-[22px] w-[204px] items-center border-b border-[#d8d8d8] bg-white font-['Liberation_Sans',sans-serif] text-[11px] text-black">
        <span className="ml-[2px] h-full w-px border-l-2 border-dotted border-[#c4c4c4]" />
        <span className="ml-7 grow whitespace-nowrap">EN English (United States)</span>
        <button type="button" aria-label="Language bar options" className="mr-1">
          <Art w={9} h={12}>
            <path d="M2 2h5v2H2zM1 8h7l-3.500 3z" fill="#000" />
          </Art>
        </button>
      </div>

      <InsertImageDialog />
    </main>
  );
}
